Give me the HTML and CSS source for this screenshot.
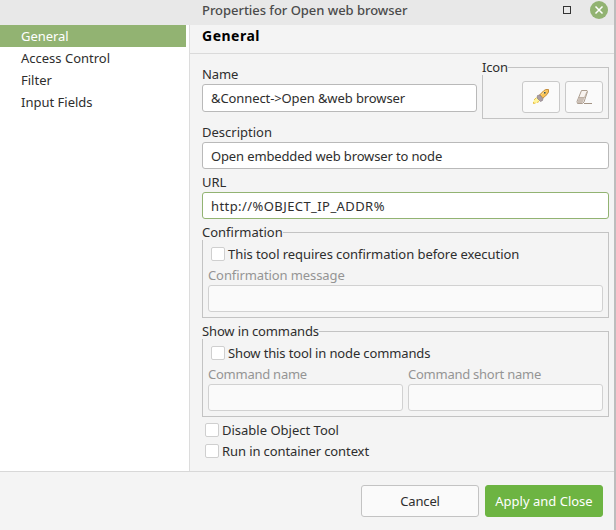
FILE: index.html
```html
<!DOCTYPE html>
<html lang="en">
<head>
<meta charset="utf-8">
<title>Properties for Open web browser</title>
<link rel="stylesheet" href="styles.css">
</head>
<body>
<div class="window">
  <header class="titlebar">
    <span class="title">Properties for Open web browser</span>
    <span class="maximize"></span>
    <svg class="close" viewBox="0 0 18 18"><circle cx="9" cy="9" r="9" fill="#92b372"/><path d="M5.5 5.5l7 7M12.5 5.5l-7 7" stroke="#fff" stroke-width="1.5"/></svg>
  </header>
  <div class="main">
    <nav class="sidebar">
      <div class="item active">General</div>
      <div class="item">Access Control</div>
      <div class="item">Filter</div>
      <div class="item">Input Fields</div>
    </nav>
    <section class="page">
      <h1 class="heading">General</h1>
      <div class="form">
        <div class="name-row">
          <div class="name-field">
            <label class="snug">Name</label>
            <div class="input name-input snug">&amp;Connect-&gt;Open &amp;web browser</div>
          </div>
          <fieldset class="group icon-group">
            <legend class="tight">Icon</legend>
            <div class="icon-buttons">
              <div class="icon-button"><svg width="18" height="16" viewBox="0 0 18 16"><path d="M5.5 7.5L3 9.5 1 13v2l2-.5 3-1 2-2z" fill="#fff59b"/><path d="M4 9l-2 2M1.5 13v1.500l2-.5M5 13.500l2-1" stroke="#e3b23a" stroke-width=".8" fill="none"/><path d="M7.500 6l4.500-4.500 2-1h2.500V3L15 5.500l-4.500 4z" fill="#f9c357" stroke="#bd8432" stroke-width=".9"/><path d="M5.500 6.500L8 6l3 3.500-.5 2-2 1L5 9z" fill="#a99da3" stroke="#81767c" stroke-width=".6"/><path d="M9.500 5.500l4-3.500" stroke="#ffe39b"/><rect x="12" y="3" width="1.500" height="1.500" fill="#2f5260"/></svg></div>
              <div class="icon-button"><svg width="18" height="16" viewBox="0 0 18 16"><path d="M6.500 1.500H12l.500 1L9 13l-1.500 1.500h-5L2 12.500z" fill="#f8f3ef" stroke="#a39384" stroke-width=".9"/><path d="M4 8.500h5.500L8 13l-.8 1H3l-.5-1.500z" fill="#cbbfb5"/><path d="M4 8.500h5.500l2.500-6" fill="none" stroke="#b5a698" stroke-width=".8"/><path d="M9 14.500h8" stroke="#a39384"/></svg></div>
            </div>
          </fieldset>
        </div>
        <label class="field-label">Description</label>
        <div class="input tight">Open embedded web browser to node</div>
        <label class="field-label">URL</label>
        <div class="input focused">http://%OBJECT_IP_ADDR%</div>
        <fieldset class="group">
          <legend>Confirmation</legend>
          <div class="check"><i class="box"></i><span class="slight">This tool requires confirmation before execution</span></div>
          <label class="disabled-label snug">Confirmation message</label>
          <div class="input disabled"></div>
        </fieldset>
        <fieldset class="group">
          <legend class="tight">Show in commands</legend>
          <div class="check"><i class="box"></i><span class="tight">Show this tool in node commands</span></div>
          <div class="columns">
            <div><label class="disabled-label tighter">Command name</label><div class="input disabled"></div></div>
            <div><label class="disabled-label tighter">Command short name</label><div class="input disabled"></div></div>
          </div>
        </fieldset>
        <div class="options">
          <div class="option"><i class="box"></i><span>Disable Object Tool</span></div>
          <div class="option"><i class="box"></i><span class="snug">Run in container context</span></div>
        </div>
      </div>
    </section>
  </div>
  <footer class="footer">
    <div class="button tight">Cancel</div>
    <div class="button primary">Apply and Close</div>
  </footer>
</div>
</body>
</html>
```
FILE: styles.css
```css
* { box-sizing: border-box; }
body { margin: 0; width: 616px; height: 530px; overflow: hidden; background: #bdbdbd; color: #2e2e2e; font: 13px/16px "Noto Sans", sans-serif; }
.window { width: 614px; height: 530px; display: flex; flex-direction: column; background: #f4f4f4; }
.titlebar { height: 25px; flex: none; display: flex; align-items: center; background: #e8e8e8; padding: 0 6px 5px 202px; color: #4b4b4b; }
.title { flex: 1; font-weight: 500; letter-spacing: -.04px; white-space: nowrap; }
.maximize { width: 8px; height: 8px; border: 1px solid #333; margin-right: 19px; }
.close { width: 18px; height: 18px; flex: none; }
.main { flex: 1; display: flex; min-height: 0; }
.sidebar { width: 190px; flex: none; padding-right: 3px; background: #fff; border-right: 1px solid #dcdcdc; }
.item { height: 22px; padding: 3px 0 3px 21px; }
.active { background: #92b372; color: #fff; letter-spacing: -.05px; }
.page { flex: 1; }
.heading { height: 29px; margin: 0; padding: 3px 0 0 12px; border-bottom: 1px solid #dadada; font: bold 14px/16px "Noto Sans", sans-serif; letter-spacing: .5px; color: #000; }
.form { padding: 5px 5px 0 12px; }
label { display: block; height: 16px; white-space: nowrap; }
.slight { letter-spacing: -.06px; }
.snug { letter-spacing: -.1px; }
.tight { letter-spacing: -.14px; }
.tighter { letter-spacing: -.25px; }
.name-row { display: flex; gap: 5px; height: 60px; }
.name-field { width: 275px; padding-top: 7px; }
.input { height: 27px; display: flex; align-items: center; padding: 0 8px; border: 1px solid #b9b9b9; border-radius: 3px; background: #fff; margin-top: 2px; white-space: nowrap; }
.name-input { height: 28px; }
.group { min-width: 0; margin: 5px 0 0; height: 94px; border: 1px solid #c3c3c3; padding: 0 5px 5px; }
legend { height: 16px; padding: 0; margin-left: -6px; background: #f4f4f4; }
.icon-group { width: 127px; height: 60px; margin: 0; }
.icon-buttons { display: flex; justify-content: flex-end; gap: 5px; padding-top: 6px; }
.icon-button { width: 38px; height: 32px; display: flex; align-items: center; justify-content: center; border: 1px solid #c9c9c9; border-radius: 3px; background: #fafafa; }
.field-label { margin-top: 5px; }
.focused { border-color: #92b372; letter-spacing: .42px; }
.check { display: flex; align-items: center; gap: 3px; height: 14px; margin: 7px 0 0 3px; white-space: nowrap; }
.box { width: 14px; height: 14px; border: 1px solid #cfcfcf; border-radius: 2px; background: #fff; }
.disabled-label { margin-top: 6px; color: #949494; }
.disabled { border-color: #d1d1d1; background: #fafafa; }
.columns { display: grid; grid-template-columns: 195px 195px; gap: 5px; }
.options { padding: 6px 0 0 3px; display: grid; gap: 7px; }
.option { height: 14px; display: flex; align-items: center; gap: 3px; white-space: nowrap; }
.footer { flex: none; height: 59px; border-top: 1px solid #d8d8d8; display: flex; justify-content: flex-end; gap: 6px; padding: 13px 11px 0; }
.button { width: 118px; height: 32px; border: 1px solid #c3c3c3; border-radius: 3px; background: #fafafa; display: flex; align-items: center; justify-content: center; white-space: nowrap; }
.primary { border-color: #6db442; background: #6db442; color: #fff; }
```
